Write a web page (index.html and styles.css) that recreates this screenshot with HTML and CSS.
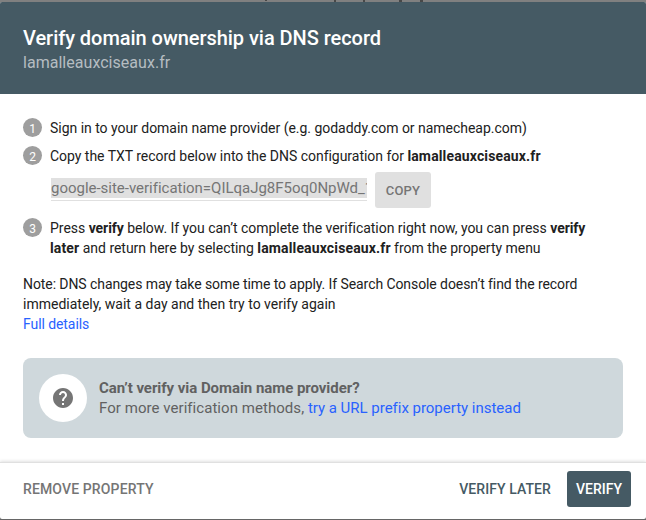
FILE: index.html
```html
<!DOCTYPE html>
<html lang="en">
<head>
<meta charset="utf-8">
<title>Verify domain ownership</title>
<link rel="stylesheet" href="styles.css">
</head>
<body>
<div class="backdrop" aria-hidden="true"><i class="m1"></i><i class="m2"></i><i class="m3"></i><i class="m4"></i><i class="m5"></i></div>
<main class="dialog">
  <header class="header">
    <h1 class="title">Verify domain ownership via DNS record</h1>
    <p class="domain">lamalleauxciseaux.fr</p>
  </header>
  <section class="content">
    <ol class="steps">
      <li class="step"><span class="num">1</span><div class="text">Sign in to your domain name provider (e.g. godaddy.com or namecheap.com)</div></li>
      <li class="step"><span class="num">2</span><div class="text">Copy the TXT record below into the DNS configuration for <b>lamalleauxciseaux.fr</b>
        <div class="record"><div class="field"><div class="value">google-site-verification=QILqaJg8F5oq0NpWd_1</div></div><button class="copy">COPY</button></div></div></li>
      <li class="step last"><span class="num">3</span><div class="text">Press <b class="tight">verify</b> below. If you can’t complete the verification right now, you can press <b class="tight">verify</b><br><b>later</b> and return here by selecting <b>lamalleauxciseaux.fr</b> from the property menu</div></li>
    </ol>
    <p class="note"><span class="note-lead">Note: DNS changes may take some time to apply. If Search Console doesn’t find the record</span><br>immediately, wait a day and then try to verify again<br><a class="note-lead">Full details</a></p>
    <aside class="hint">
      <span class="disc"><svg viewBox="0 0 24 24" width="24" height="24"><path fill="#757575" d="M12 2C6.48 2 2 6.48 2 12s4.480 10 10 10 10-4.480 10-10S17.520 2 12 2zm1 17h-2v-2h2v2zm2.070-7.750l-.9.920C13.450 12.900 13 13.500 13 15h-2v-.5c0-1.100.450-2.100 1.170-2.830l1.240-1.260c.370-.360.590-.860.590-1.410 0-1.100-.9-2-2-2s-2 .9-2 2H8c0-2.210 1.790-4 4-4s4 1.790 4 4c0 .880-.360 1.680-.930 2.250z"/></svg></span>
      <div class="hint-text"><b>Can’t verify via Domain name provider?</b><br>For more verification methods, <a>try a URL prefix property instead</a></div>
    </aside>
  </section>
  <footer class="footer">
    <button class="action remove">REMOVE PROPERTY</button>
    <button class="action later">VERIFY LATER</button>
    <button class="action verify">VERIFY</button>
  </footer>
</main>
</body>
</html>
```
FILE: styles.css
```css
* { box-sizing: border-box; }
body { margin: 0; height: 520px; overflow: hidden; background: #666; font: 14px/20px Roboto, sans-serif; color: #212121; }
h1, p, ol { margin: 0; padding: 0; }
button { border: 0; background: none; padding: 0; font-family: inherit; }
a { color: #2962ff; }
.backdrop { height: 2px; background: #808080; position: relative; }
.backdrop i { position: absolute; top: 0; width: 2px; height: 2px; background: #484848; }
.backdrop .m1 { left: 265px; height: 1px; }
.backdrop .m2 { left: 334px; }
.backdrop .m3 { left: 363px; }
.backdrop .m4 { left: 399px; width: 3px; }
.backdrop .m5 { left: 420px; width: 3px; }
.dialog { height: 517px; display: flex; flex-direction: column; background: #fff; border-radius: 2px; overflow: hidden; }
.header { height: 92px; padding: 24px 23px 0; background: #455a64; }
.title { font-size: 20px; line-height: 24px; font-weight: 500; letter-spacing: -.045px; color: #fff; }
.domain { padding-top: 1px; font-size: 16px; line-height: 24px; letter-spacing: .03px; color: #b5bdc1; }
.content { flex: 1; padding: 24px 23px 0; }
.steps { list-style: none; }
.step { display: flex; gap: 8px; margin-bottom: 8px; }
.step.last { margin-bottom: 16px; }
.num { flex: none; width: 19px; height: 19px; border-radius: 50%; background: #9e9e9e; color: #fff; font-size: 12px; line-height: 22px; text-align: center; }
.text { white-space: nowrap; letter-spacing: -.028px; }
.text b { letter-spacing: .14px; }
.text .tight { letter-spacing: -.06px; }
.record { display: flex; gap: 8px; margin-top: 6px; margin-bottom: 2px; padding-left: 1px; height: 36px; }
.field { width: 316px; height: 29px; padding-top: 6px; border-bottom: 1px solid #e0e0e0; overflow: hidden; }
.value { height: 20px; background: #e0e0e0; color: #757575; font-size: 15px; line-height: 20px; letter-spacing: -.015px; overflow: hidden; }
.copy { width: 56px; height: 36px; border-radius: 3px; background: #e0e0e0; color: #757575; font-size: 13px; font-weight: 500; letter-spacing: .2px; }
.note { white-space: nowrap; }
.note-lead { letter-spacing: -.08px; }
.hint { display: flex; align-items: center; gap: 12px; height: 80px; margin-top: 24px; padding: 0 16px; border-radius: 8px; background: #cfd8dc; color: #616161; font-size: 15px; letter-spacing: .05px; white-space: nowrap; }
.hint a { letter-spacing: -.02px; }
.hint b { letter-spacing: -.05px; }
.disc { width: 48px; height: 48px; border-radius: 50%; background: #fff; display: flex; align-items: center; justify-content: center; }
.footer { display: flex; align-items: center; height: 57px; padding: 0 15px 5px 23px; border-top: 1px solid #e0e0e0; box-shadow: 0 -1px 3px rgba(0,0,0,.12); }
.action { height: 36px; font-size: 14px; font-weight: 500; }
.remove { margin-right: auto; letter-spacing: .13px; color: #757575; }
.later { margin-right: 16px; letter-spacing: .08px; color: #455a64; }
.verify { width: 64px; border-radius: 3px; background: #455a64; color: #fff; }
```
